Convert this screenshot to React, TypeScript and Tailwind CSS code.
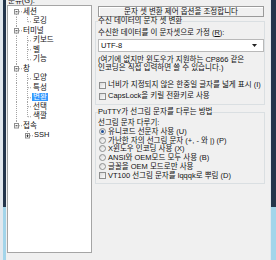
import React from "react";

type Row = {
  label: string;
  kind: "root" | "child";
  first?: boolean;
  lastRoot?: boolean;
  last?: boolean;
  collapsed?: boolean;
  noRootLine?: boolean;
  selected?: boolean;
};

const rows: Row[] = [
  { label: "세션", kind: "root", first: true },
  { label: "로깅", kind: "child", last: true },
  { label: "터미널", kind: "root" },
  { label: "키보드", kind: "child" },
  { label: "벨", kind: "child" },
  { label: "기능", kind: "child", last: true },
  { label: "창", kind: "root" },
  { label: "모양", kind: "child" },
  { label: "특성", kind: "child" },
  { label: "변환", kind: "child", selected: true },
  { label: "선택", kind: "child" },
  { label: "색깔", kind: "child", last: true },
  { label: "접속", kind: "root", lastRoot: true },
  { label: "SSH", kind: "child", last: true, collapsed: true, noRootLine: true },
];

const LINE = "#a3a3a3";

function Lines({ row }: { row: Row }) {
  const c = 4.75;
  if (row.kind === "root") {
    return (
      <svg width={15} height={9.5} className="shrink-0">
        {!row.first && <line x1={8.5} y1={0} x2={8.5} y2={2.5} stroke={LINE} strokeDasharray="1 1" />}
        {!row.lastRoot && <line x1={8.5} y1={7} x2={8.5} y2={9.5} stroke={LINE} strokeDasharray="1 1" />}
        <line x1={11} y1={c} x2={14} y2={c} stroke={LINE} strokeDasharray="1 1" />
        <rect x={6.5} y={2.5} width={4} height={4.5} fill="#fff" stroke="#8f8f8f" />
        <line x1={7.5} y1={c} x2={9.5} y2={c} stroke="#333" />
      </svg>
    );
  }
  if (row.collapsed) {
    return (
      <svg width={26} height={9.5} className="shrink-0">
        <line x1={19.5} y1={0} x2={19.5} y2={2.5} stroke={LINE} strokeDasharray="1 1" />
        <line x1={22} y1={c} x2={25} y2={c} stroke={LINE} strokeDasharray="1 1" />
        <rect x={17.5} y={2.5} width={4} height={4.5} fill="#fff" stroke="#8f8f8f" />
        <line x1={18.5} y1={c} x2={20.5} y2={c} stroke="#333" />
        <line x1={19.5} y1={3.5} x2={19.5} y2={6} stroke="#333" />
      </svg>
    );
  }
  return (
    <svg width={25} height={9.5} className="shrink-0">
      {!row.noRootLine && <line x1={8.5} y1={0} x2={8.5} y2={9.5} stroke={LINE} strokeDasharray="1 1" />}
      <line x1={19.5} y1={0} x2={19.5} y2={row.last ? c : 9.5} stroke={LINE} strokeDasharray="1 1" />
      <line x1={20} y1={c} x2={24} y2={c} stroke={LINE} strokeDasharray="1 1" />
    </svg>
  );
}

function Box() {
  return (
    <span className="w-[7px] h-[7px] ml-[1px] mr-[2px] shrink-0 border border-[#8e8f8f] bg-[linear-gradient(135deg,#dadada,#fcfcfc)]" />
  );
}

function Check({ label }: { label: string }) {
  return (
    <div className="flex items-center h-[10px] whitespace-nowrap">
      <Box />
      <span>{label}</span>
    </div>
  );
}

function Radio({ label, checked }: { label: string; checked?: boolean }) {
  return (
    <div className="flex items-center h-[8.75px] whitespace-nowrap">
      <span className="w-[7px] h-[7px] ml-[1px] mr-[2px] shrink-0 rounded-full border border-[#8e8f8f] bg-[linear-gradient(135deg,#d8d8d8,#fcfcfc)] flex items-center justify-center">
        {checked && <span className="w-[3px] h-[3px] rounded-full bg-[#1d4f9a]" />}
      </span>
      <span>{label}</span>
    </div>
  );
}

export default function App() {
  return (
    <div className="w-[276px] h-[260px] flex overflow-hidden bg-[#f0f0f0] text-[7.5px] text-[#111] font-[family-name:'Liberation_Sans','Noto_Sans_CJK_KR',sans-serif]">
      <div className="w-[3px] bg-[#e2e8ee]" />
      <div className="w-[3px] flex flex-col">
        <div className="h-[207px] bg-[#24354b]" />
        <div className="flex-1 bg-[#a3d5ea]" />
      </div>

      <div className="w-[264px] flex overflow-hidden">
        {/* category tree */}
        <div className="w-[89px] pl-[1px] flex flex-col shrink-0">
          <div className="h-[8px] -mt-[3px] leading-[8px] pl-[1px] whitespace-nowrap">분류(G):</div>
          <div className="w-[85px] h-[248px] border border-[#a5a5a5] bg-white pt-[1px]">
            {rows.map((r) => (
              <div key={r.label} className="flex items-center h-[9.5px] whitespace-nowrap">
                <Lines row={r} />
                {r.selected ? (
                  <span className="-ml-[1px] px-[1px] leading-[8px] bg-[#3399ff] text-white">{r.label}</span>
                ) : (
                  <span className="leading-[8px]">{r.label}</span>
                )}
              </div>
            ))}
          </div>
        </div>

        {/* settings panel */}
        <div className="w-[170px] shrink-0 flex flex-col">
          <div className="mt-[6px] ml-[3px] w-[166px] h-[11px] border border-[#9a9a9a] shadow-[inset_1px_1px_0_#ffffff] flex items-center justify-center leading-[9px] whitespace-nowrap">
            문자 셋 변환 제어 옵션을 조정합니다
          </div>

          <fieldset className="-mt-[1px] min-w-0 border border-[#dadfe2] pl-[2px] pb-[3px]">
            <legend className="leading-[10px] p-0 whitespace-nowrap">수신 데이터의 문자 셋 변환</legend>
            <div className="mt-[2px] h-[10px] flex items-center whitespace-nowrap">
              수신한 데이터를 이 문자셋으로 가정 (<span className="underline">R</span>):
            </div>
            <div className="mt-[1px] w-[166px] h-[13px] border border-[#b9b9b9] bg-white flex items-center justify-between pl-[2px] pr-[6px]">
              <span>UTF-8</span>
              <svg width={5} height={3} viewBox="0 0 5 3">
                <path d="M0 0h5L2.5 3z" fill="#222" />
              </svg>
            </div>
            <div className="mt-[4px] leading-[8px] whitespace-nowrap">
              <div>(여기에 없지만 윈도우가 지원하는 CP866 같은</div>
              <div>인코딩은 직접 입력하면 쓸 수 있습니다.)</div>
            </div>
            <div className="mt-[8px]">
              <Check label="너비가 지정되지 않은 한중일 글자를 넓게 표시 (I)" />
            </div>
            <div className="mt-[1px]">
              <Check label="CapsLock을 키릴 전환키로 사용" />
            </div>
          </fieldset>

          <fieldset className="mt-[2px] min-w-0 border border-[#dadfe2] pl-[2px] pb-[3px]">
            <legend className="leading-[10px] p-0 whitespace-nowrap">PuTTY가 선그림 문자를 다루는 방법</legend>
            <div className="mt-[1px] h-[9px] flex items-center">선그림 문자 다루기:</div>
            <Radio label="유니코드 선문자 사용 (U)" checked />
            <Radio label="가난한 자의 선그림 문자 (+, - 와 |) (P)" />
            <Radio label="X윈도우 인코딩 사용 (X)" />
            <Radio label="ANSI와 OEM모드 모두 사용 (B)" />
            <Radio label="글꼴을 OEM 모드로만 사용" />
            <div className="h-[9px] flex items-center whitespace-nowrap">
              <Box />
              <span>VT100 선그림 문자를 lqqqk로 뿌림 (D)</span>
            </div>
          </fieldset>
        </div>
      </div>

      <div className="w-[1px] bg-[#e2e8ee]" />
      <div className="w-[5px] flex flex-col">
        <div className="h-[207px] bg-[#24354b]" />
        <div className="flex-1 bg-[#a3d5ea]" />
      </div>
    </div>
  );
}
